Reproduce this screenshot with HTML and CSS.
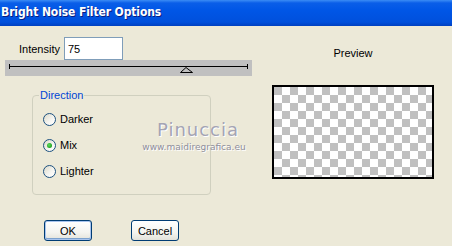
FILE: index.html
```html
<!DOCTYPE html>
<html lang="en">
<head>
    <meta charset="UTF-8">
    <title>Bright Noise Filter Options</title>
    <link rel="stylesheet" href="styles.css">
</head>
<body>
    <div class="title-bar">Bright Noise Filter Options</div>

    <div class="dialog">
        <div class="left">
            <div class="intensity">
                <label for="intensity">Intensity</label>
                <input id="intensity" type="text" value="75">
            </div>

            <div class="slider">
                <svg width="247" height="16" viewBox="0 0 247 16">
                    <line x1="4" y1="6.5" x2="242" y2="6.5" stroke="#000" stroke-width="1"/>
                    <line x1="4.5" y1="4" x2="4.5" y2="9" stroke="#000" stroke-width="1"/>
                    <line x1="242.5" y1="4" x2="242.5" y2="9" stroke="#000" stroke-width="1"/>
                    <polygon points="181,7.5 175.5,12.5 187.5,12.5" fill="#c0c0c0" stroke="#000" stroke-width="1"/>
                </svg>
            </div>

            <fieldset class="direction">
                <legend>Direction</legend>
                <label class="radio"><span class="dot"></span>Darker</label>
                <label class="radio checked"><span class="dot"></span>Mix</label>
                <label class="radio"><span class="dot"></span>Lighter</label>
            </fieldset>

            <div class="buttons">
                <button class="btn default">OK</button>
                <button class="btn">Cancel</button>
            </div>
        </div>

        <div class="right">
            <div class="preview-label">Preview</div>
            <div class="preview"></div>
        </div>

        <!-- watermark over the dialog -->
        <div class="watermark">
            <div class="wm-name">Pinuccia</div>
            <div class="wm-site">www.maidiregrafica.eu</div>
        </div>
    </div>
</body>
</html>
```

FILE: styles.css
```css
body {
    margin: 0;
    background: #ece9d8;
    font-family: "Liberation Sans", Arial, sans-serif;
    font-size: 11px;
    color: #000;
    overflow: hidden;
}

.title-bar {
    height: 26px;
    box-sizing: border-box;
    padding: 5px 0 0 1px;
    background: linear-gradient(to bottom, #3b8cf5 0, #0a5ee8 3px, #0056e6 40%, #0050dc 85%, #0040c0 100%);
    color: #fff;
    font-family: "DejaVu Sans Condensed", "Liberation Sans Narrow", sans-serif;
    font-weight: bold;
    font-size: 12px;
    letter-spacing: -0.1px;
    text-shadow: 1px 1px 0 #0a1e80;
    white-space: nowrap;
}

.dialog {
    position: relative;
    display: grid;
    grid-template-columns: 252px 1fr;
    padding-left: 5px;
}

.intensity {
    display: flex;
    align-items: center;
    gap: 4px;
    margin-top: 11px;
    padding-left: 14px;
    height: 23px;
}

.intensity input {
    width: 59px;
    height: 23px;
    box-sizing: border-box;
    border: 1px solid #7f9db9;
    background: #fff;
    font-family: inherit;
    font-size: 11px;
    padding: 0 3px;
    margin: 0;
}

.slider {
    width: 247px;
    height: 16px;
    background: #c0c0c0;
}

.slider svg {
    display: block;
}

.direction {
    width: 179px;
    height: 106px;
    box-sizing: border-box;
    margin: 13px 0 0 27px;
    padding: 5px 0 0 10px;
    border: 1px solid #d0d0bf;
    border-radius: 4px;
    position: relative;
}

.direction legend {
    color: #0046d5;
    padding: 0 1px;
    margin-left: -4px;
}

.radio {
    display: flex;
    align-items: center;
    gap: 4px;
    height: 26px;
}

.radio .dot {
    width: 11px;
    height: 11px;
    border: 1px solid #1c5180;
    border-radius: 50%;
    background: linear-gradient(135deg, #dcd9c8 0%, #f6f6f3 60%, #fff 100%);
    display: flex;
    align-items: center;
    justify-content: center;
}

.radio.checked .dot::after {
    content: "";
    width: 5px;
    height: 5px;
    border-radius: 50%;
    background: radial-gradient(circle at 40% 40%, #5edc5e, #21a121 70%);
}

.buttons {
    display: flex;
    gap: 39px;
    margin: 25px 0 0 39px;
}

.btn {
    width: 48px;
    height: 21px;
    padding: 0;
    border: 1px solid #003c74;
    border-radius: 3px;
    background: linear-gradient(to bottom, #fff 0%, #f4f4f0 60%, #e3e2da 100%);
    font-family: inherit;
    font-size: 11px;
    color: #000;
}

.btn.default {
    box-shadow: inset 0 0 0 1px #a8c4ee, inset 0 -1px 0 1px #7da2ce;
}

.right {
    padding-left: 15px;
}

.preview-label {
    width: 162px;
    text-align: center;
    margin-top: 21px;
    height: 13px;
}

.preview {
    width: 162px;
    height: 94px;
    box-sizing: border-box;
    margin-top: 25px;
    border: 2px solid #000;
    background-color: #fff;
    background-image: conic-gradient(#c0c0c0 25%, #fff 0 50%, #c0c0c0 0 75%, #fff 0);
    background-size: 16px 16px;
    background-position: 8px 0;
}

.watermark {
    position: absolute;
    left: 128px;
    top: 93px;
    width: 132px;
    text-align: center;
    pointer-events: none;
}

.wm-name {
    font-family: "DejaVu Sans", sans-serif;
    font-size: 18px;
    color: #a4a4b4;
    letter-spacing: 1px;
    padding-left: 8px;
    text-shadow: 1px 1px 0 #fff;
}

.wm-site {
    font-family: "DejaVu Sans", sans-serif;
    font-size: 9px;
    color: #8e8e9c;
    margin-top: 2px;
    text-shadow: 1px 1px 0 #fff;
}
```
